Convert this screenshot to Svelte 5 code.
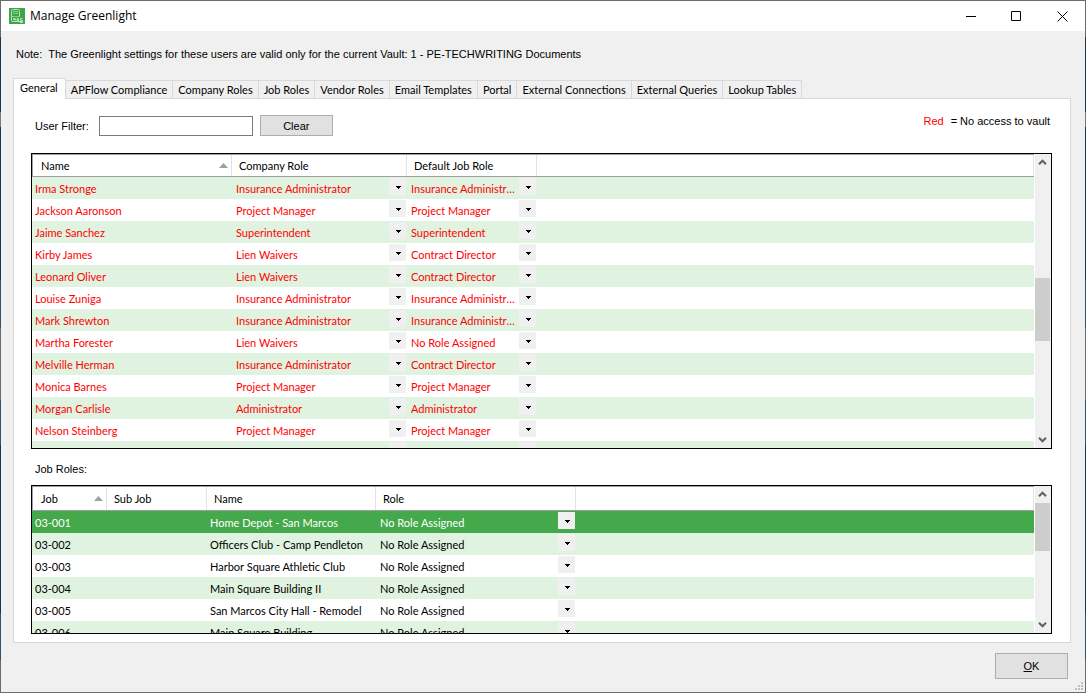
<script>
  let filter = $state('');
  let active = $state('General');

  const tabs = [
    'General', 'APFlow Compliance', 'Company Roles', 'Job Roles', 'Vendor Roles',
    'Email Templates', 'Portal', 'External Connections', 'External Queries', 'Lookup Tables'
  ];

  const users = [
    ['Irma Stronge', 'Insurance Administrator', 'Insurance Administrator'],
    ['Jackson Aaronson', 'Project Manager', 'Project Manager'],
    ['Jaime Sanchez', 'Superintendent', 'Superintendent'],
    ['Kirby James', 'Lien Waivers', 'Contract Director'],
    ['Leonard Oliver', 'Lien Waivers', 'Contract Director'],
    ['Louise Zuniga', 'Insurance Administrator', 'Insurance Administrator'],
    ['Mark Shrewton', 'Insurance Administrator', 'Insurance Administrator'],
    ['Martha Forester', 'Lien Waivers', 'No Role Assigned'],
    ['Melville Herman', 'Insurance Administrator', 'Contract Director'],
    ['Monica Barnes', 'Project Manager', 'Project Manager'],
    ['Morgan Carlisle', 'Administrator', 'Administrator'],
    ['Nelson Steinberg', 'Project Manager', 'Project Manager'],
    ['', '', '']
  ];

  const jobs = [
    ['03-001', 'Home Depot - San Marcos'],
    ['03-002', 'Officers Club - Camp Pendleton'],
    ['03-003', 'Harbor Square Athletic Club'],
    ['03-004', 'Main Square Building II'],
    ['03-005', 'San Marcos City Hall - Remodel'],
    ['03-006', 'Main Square Building']
  ];
</script>

{#snippet picker(value, label)}
  <div class="picker">
    <select aria-label={label}><option>{value}</option></select>
    <span class="drop"><svg width="5" height="3" viewBox="0 0 5 3" shape-rendering="crispEdges"><path d="M0 0h5v1H4v1H3v1H2V2H1V1H0z" /></svg></span>
  </div>
{/snippet}

{#snippet sortMark()}
  <svg width="9" height="5" viewBox="0 0 9 5"><path d="M4.5 0 9 5H0z" fill="#a0a0a0" /></svg>
{/snippet}

{#snippet scrollbar(before, thumb, after)}
  <div class="scrollbar">
    <button aria-label="Scroll up"><svg width="9" height="7" viewBox="0 0 9 7"><path d="M1 5.2 4.5 1.7 8 5.2" /></svg></button>
    <div style:flex-grow={before}></div>
    <div class="thumb" style:flex-grow={thumb}></div>
    <div style:flex-grow={after}></div>
    <button aria-label="Scroll down"><svg width="9" height="7" viewBox="0 0 9 7"><path d="M1 1.8 4.5 5.3 8 1.8" /></svg></button>
  </div>
{/snippet}

<div class="frame">
  <div class="window">
    <header>
      <svg width="16" height="16" viewBox="0 0 16 16">
        <rect width="16" height="16" fill="#3fa648" />
        <g fill="none" stroke="#b9e3bc">
          <path d="M2.500 9V3.500Q2.500 1.500 4.500 1.500H8.500Q10.500 1.500 10.500 3.500V8" />
          <path d="M4.500 5V4Q4.500 3.500 5 3.500H8Q8.500 3.500 8.500 4V5.500H4.500" stroke="#8acb8f" />
          <path d="M2.500 8V12.500Q2.500 13.500 4 13.500H13" />
          <path d="M3 8.500H11" stroke="#8acb8f" />
          <path d="M6.500 10.500H4.500V11.500H6.500V12.500M9.500 12.500H8V10.500H9.500V13M13.500 10.500H11.500V12.500H13.500V14.500H11" />
        </g>
      </svg>
      <h1>Manage Greenlight</h1>
      <div class="caption">
        <button aria-label="Minimize"><svg width="11" height="11" viewBox="0 0 11 11"><path d="M1 5.5h10" /></svg></button>
        <button aria-label="Maximize"><svg width="11" height="11" viewBox="0 0 11 11"><path d="M.5.5h9v9h-9z" /></svg></button>
        <button aria-label="Close"><svg width="11" height="11" viewBox="0 0 11 11"><path d="m.5.5 10 10m0-10-10 10" /></svg></button>
      </div>
    </header>

    <p class="note">Note:&nbsp; The Greenlight settings for these users are valid only for the current Vault: 1 - PE-TECHWRITING Documents</p>

    <div class="tabs" role="tablist">
      {#each tabs as tab}
        <button role="tab" class:active={tab === active} aria-selected={tab === active} onclick={() => (active = tab)}>{tab}</button>
      {/each}
    </div>

    <main>
      <div class="filter">
        <label for="user-filter">User Filter:</label>
        <input id="user-filter" type="text" bind:value={filter} />
        <button class="push clear" onclick={() => (filter = '')}>Clear</button>
        <p class="legend"><span>Red</span>= No access to vault</p>
      </div>

      <section class="list users">
        <div class="view">
          <table>
            <colgroup><col class="w200" /><col class="w175" /><col class="w130" /><col /></colgroup>
            <thead>
              <tr><th><div>Name {@render sortMark()}</div></th><th>Company Role</th><th>Default Job Role</th><th></th></tr>
            </thead>
            <tbody>
              {#each users as [name, company, job]}
                <tr>
                  <td>{name}</td>
                  <td>{@render picker(company, 'Company role')}</td>
                  <td>{@render picker(job, 'Default job role')}</td>
                  <td></td>
                </tr>
              {/each}
            </tbody>
          </table>
        </div>
        {@render scrollbar(107, 63, 90)}
      </section>

      <h2>Job Roles:</h2>

      <section class="list jobs">
        <div class="view">
          <table>
            <colgroup><col class="w75" /><col class="w100" /><col class="w169" /><col class="w200" /><col /></colgroup>
            <thead>
              <tr><th><div>Job {@render sortMark()}</div></th><th>Sub Job</th><th>Name</th><th>Role</th><th></th></tr>
            </thead>
            <tbody>
              {#each jobs as [job, name], i}
                <tr class:selected={i === 0}>
                  <td>{job}</td>
                  <td></td>
                  <td>{name}</td>
                  <td>{@render picker('No Role Assigned', 'Role')}</td>
                  <td></td>
                </tr>
              {/each}
            </tbody>
          </table>
        </div>
        {@render scrollbar(0, 48, 65)}
      </section>
    </main>

    <footer>
      <button class="push ok"><u>O</u>K</button>
      <svg class="grip" width="8" height="8" viewBox="0 0 8 8" fill="#bfbfbf"><path d="M6 0h2v2H6zM3 3h2v2H3zM6 3h2v2H6zM0 6h2v2H0zM3 6h2v2H3zM6 6h2v2H6z" /></svg>
    </footer>
  </div>
</div>

<style>
  .frame {
    box-sizing: border-box;
    height: 100vh;
    padding: 1px;
    background: linear-gradient(#6b6b6b 37px, #1d3347 37px 112px, #7a7a7a 112px 127px, #1d3347 127px 280px, #2e5475 280px 328px, #6b6b6b 328px 400px, #2e5475 400px 445px, #1d3347 445px 613px, #2e5475 613px 660px, #6b6b6b 660px);
    font: 11px/14px 'Liberation Sans', Arial, sans-serif;
    color: #000;
  }
  :global(body) { margin: 0; }
  .window {
    display: flex;
    flex-direction: column;
    height: 100%;
    background: #f0f0f0;
  }
  button, input, select { font: inherit; color: inherit; }
  button { padding: 0; border: 0; background: none; }
  p, h1, h2 { margin: 0; font-weight: normal; }

  header {
    display: flex;
    align-items: center;
    height: 30px;
    padding-left: 8px;
    background: #fff;
  }
  h1 { margin-left: 5px; font: 12px/16px 'Open Sans', 'Noto Sans', sans-serif; }
  .caption { display: flex; height: 100%; margin-left: auto; }
  .caption button { display: flex; align-items: center; justify-content: center; width: 46px; }
  .caption path { fill: none; stroke: #000; }

  .note { padding: 16px 15px 0; }

  .tabs, .list { font-family: Lato, 'Liberation Sans', sans-serif; }
  .tabs { display: flex; align-items: flex-end; height: 20px; margin: 17px 0 0 12px; z-index: 1; }
  .tabs button {
    height: 18px;
    padding: 1px 5px 0;
    border: solid #d9d9d9;
    border-width: 1px 1px 0 0;
  }
  .tabs .active {
    height: 21px;
    margin-bottom: -1px;
    padding: 0 7px 2px 6px;
    border-left-width: 1px;
    background: #fff;
  }

  main {
    display: flex;
    flex: 1;
    flex-direction: column;
    min-height: 0;
    margin: 0 14px 0 12px;
    padding: 16px 18px 8px 17px;
    border: 1px solid #d9d9d9;
    background: #fff;
  }
  .filter { display: flex; align-items: center; height: 22px; padding-left: 4px; }
  .filter input {
    box-sizing: border-box;
    width: 154px;
    height: 20px;
    margin: 0 7px 0 10px;
    padding: 0 3px;
    border: 1px solid #7a7a7a;
    background: #fff;
  }
  .push {
    box-sizing: border-box;
    width: 73px;
    height: 21px;
    border: 1px solid #adadad;
    background: #e1e1e1;
  }
  .clear { align-self: flex-start; }
  .legend { margin: 0 2px 10px auto; }
  .legend span { margin-right: 7px; color: #f00; }

  .list { display: flex; min-height: 0; border: 1px solid #000; }
  .users { flex: 294 1 0; margin-top: 16px; }
  .jobs { flex: 147 1 0; }
  .view { flex: 1; overflow: hidden; }
  h2 { padding: 13px 4px 9px; font-size: 11px; }

  table { width: 100%; border-collapse: separate; border-spacing: 0; table-layout: fixed; }
  th {
    box-sizing: border-box;
    height: 23px;
    padding: 0 7px;
    border: solid #a0a0a0;
    border-width: 1px 0;
    font-weight: normal;
    text-align: left;
    background: linear-gradient(#e3e3e3, #e3e3e3) right / 1px 100% no-repeat #fff;
  }
  .jobs th { height: 25px; }
  th:first-child { padding: 0 4px 0 8px; border-left-width: 1px; }
  th div { display: flex; align-items: center; justify-content: space-between; }
  td { height: 22px; padding: 2px 0 0 3px; box-sizing: border-box; white-space: nowrap; }
  td:has(.picker) { padding: 0; }
  .users tbody tr:nth-child(odd), .jobs tbody tr:nth-child(even) { background: #dff3e0; }
  .jobs tbody .selected { background: #43a94b; color: #fff; }
  .w75 { width: 75px; }
  .w100 { width: 100px; }
  .w130 { width: 130px; }
  .w169 { width: 169px; }
  .w175 { width: 175px; }
  .w200 { width: 200px; }
  .users tbody { color: #f00; }

  .picker { display: grid; grid-template-columns: 1fr 17px 1px; height: 22px; }
  .picker select {
    grid-area: 1 / 1 / 2 / 4;
    min-width: 0;
    padding: 2px 20px 0 4px;
    border: 0;
    appearance: none;
    background: none;
    text-overflow: ellipsis;
  }
  .drop {
    box-sizing: border-box;
    display: flex;
    grid-area: 1 / 2;
    align-items: center;
    justify-content: center;
    height: 17px;
    margin-top: 1px;
    padding: 2px 0 0 2px;
    background: #f0f0f0;
    pointer-events: none;
  }

  .scrollbar { display: flex; flex-direction: column; width: 16px; margin-left: 1px; background: #f0f0f0; }
  .scrollbar button { display: flex; align-items: center; justify-content: center; height: 17px; padding-right: 1px; }
  .scrollbar path { fill: none; stroke: #606060; stroke-width: 2; }
  .thumb { margin-right: 1px; background: #cdcdcd; }

  footer { display: flex; align-items: flex-end; justify-content: flex-end; height: 49px; }
  .ok { height: 26px; margin: 0 7px 13px; }
  .grip { margin: 0 2px 2px 0; }
</style>
